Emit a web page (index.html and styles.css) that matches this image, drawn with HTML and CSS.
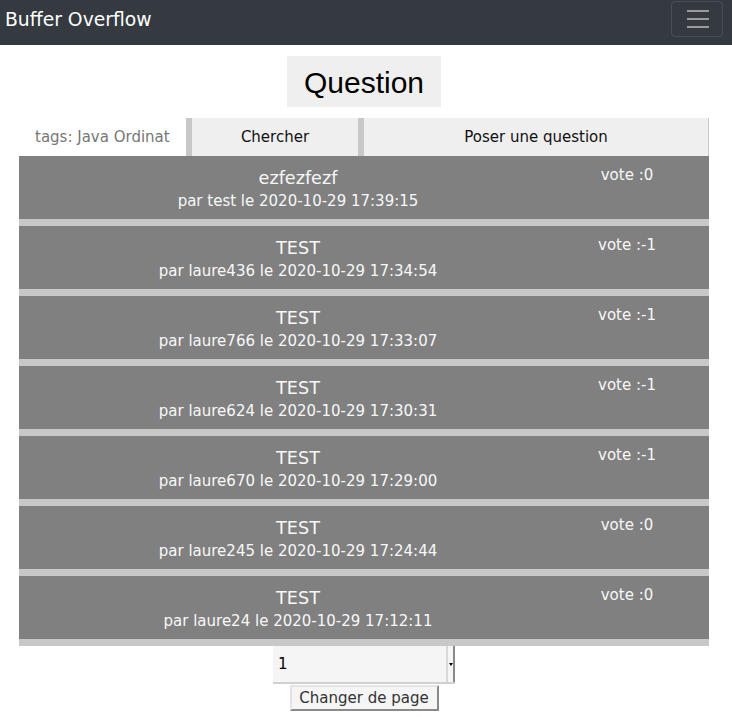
FILE: index.html
```html
<!DOCTYPE html>
<html lang="fr">
<head>
<meta charset="utf-8">
<title>Buffer Overflow</title>
<link rel="stylesheet" href="styles.css">
</head>
<body>
<nav class="navbar">
  <span class="brand">Buffer Overflow</span>
  <button class="toggler" type="button" aria-label="menu">
    <svg width="30" height="30" viewBox="0 0 30 30"><path d="M4 7h22M4 15h22M4 23h22" stroke="rgba(255,255,255,0.5)" stroke-width="2" stroke-linecap="butt" fill="none"/></svg>
  </button>
</nav>
<main class="main">
  <div class="heading-wrap"><h1 class="heading">Question</h1></div>
  <div class="tabs">
    <input class="tag-input" type="text" placeholder="tags: Java Ordinateur">
    <button class="tab-btn tab-search" type="button">Chercher</button>
    <button class="tab-btn tab-ask" type="button">Poser une question</button>
  </div>
  <ul class="questions">
    <li class="q"><div class="q-main"><div class="q-title">ezfezfezf</div><div class="q-meta">par test le 2020-10-29 17:39:15</div></div><div class="q-vote">vote :0</div></li>
    <li class="q"><div class="q-main"><div class="q-title">TEST</div><div class="q-meta">par laure436 le 2020-10-29 17:34:54</div></div><div class="q-vote">vote :-1</div></li>
    <li class="q"><div class="q-main"><div class="q-title">TEST</div><div class="q-meta">par laure766 le 2020-10-29 17:33:07</div></div><div class="q-vote">vote :-1</div></li>
    <li class="q"><div class="q-main"><div class="q-title">TEST</div><div class="q-meta">par laure624 le 2020-10-29 17:30:31</div></div><div class="q-vote">vote :-1</div></li>
    <li class="q"><div class="q-main"><div class="q-title">TEST</div><div class="q-meta">par laure670 le 2020-10-29 17:29:00</div></div><div class="q-vote">vote :-1</div></li>
    <li class="q"><div class="q-main"><div class="q-title">TEST</div><div class="q-meta">par laure245 le 2020-10-29 17:24:44</div></div><div class="q-vote">vote :0</div></li>
    <li class="q"><div class="q-main"><div class="q-title">TEST</div><div class="q-meta">par laure24 le 2020-10-29 17:12:11</div></div><div class="q-vote">vote :0</div></li>
  </ul>
  <div class="pager">
    <div class="select-wrap">
      <select class="page-select"><option>1</option><option>2</option></select>
      <span class="select-arrow"></span>
    </div>
    <button class="page-btn" type="button">Changer de page</button>
  </div>
</main>
</body>
</html>
```
FILE: styles.css
```css
html, body {
  margin: 0;
  padding: 0;
  background: #ffffff;
}
body {
  font-family: "DejaVu Sans", sans-serif;
  font-size: 15px;
  color: #212529;
}
.navbar {
  height: 45px;
  box-sizing: border-box;
  background: #343a40;
  display: flex;
  justify-content: space-between;
  align-items: flex-start;
  padding: 1px 9px 0 5px;
}
.brand {
  color: #ffffff;
  font-size: 18.75px;
  line-height: 37px;
}
.toggler {
  width: 52px;
  height: 36px;
  box-sizing: border-box;
  background: transparent;
  border: 1px solid rgba(255, 255, 255, 0.1);
  border-radius: 4px;
  padding: 0;
  display: flex;
  align-items: center;
  justify-content: center;
}
.toggler svg {
  display: block;
  margin-left: 2px;
}
.main {
  margin: 0 23px 0 19px;
}
.heading-wrap {
  display: flex;
  justify-content: center;
  padding-top: 11px;
}
.heading {
  margin: 0;
  font-family: "Liberation Sans", Arial, sans-serif;
  font-weight: normal;
  font-size: 30px;
  line-height: 36px;
  padding: 9px 17px 6px;
  background: #efefef;
  color: #000000;
}
.tabs {
  display: flex;
  height: 38px;
  margin-top: 11px;
}
.tag-input {
  width: 167px;
  box-sizing: border-box;
  border: none;
  outline: none;
  padding: 0 16px 0 16px;
  margin: 0;
  background: #ffffff;
  font-family: "DejaVu Sans", sans-serif;
  font-size: 15px;
  color: #333;
}
.tag-input::placeholder {
  color: #777777;
  opacity: 1;
}
.tab-btn {
  box-sizing: border-box;
  margin: 0;
  border: none;
  border-left: 6px solid #c8c8c8;
  background: #efefef;
  font-family: "DejaVu Sans", sans-serif;
  font-size: 15px;
  color: #111111;
  padding: 0;
  line-height: 38px;
}
.tab-search {
  width: 172px;
}
.tab-ask {
  width: 351px;
  border-right: 1px solid #c8c8c8;
}
.questions {
  list-style: none;
  margin: 0;
  padding: 0;
}
.q {
  display: grid;
  grid-template-columns: 558px 1fr;
  align-items: start;
  height: 70px;
  box-sizing: border-box;
  background: #808080;
  border-bottom: 7px solid #c8c8c8;
  color: #f8f8f8;
}
.q-main {
  text-align: center;
  padding-top: 11px;
}
.q-title {
  font-size: 17.6px;
  line-height: 23px;
}
.q-meta {
  font-size: 15px;
  line-height: 21px;
  margin-top: 1px;
}
.q-vote {
  text-align: center;
  padding-top: 9px;
  padding-right: 32px;
  font-size: 15px;
  line-height: 21px;
}
.pager {
  display: flex;
  flex-direction: column;
  align-items: center;
}
.select-wrap {
  display: flex;
  width: 182px;
  height: 38px;
  box-sizing: border-box;
  border-bottom: 2px solid #d0d0d0;
  background: #f5f5f5;
}
.page-select {
  appearance: none;
  -webkit-appearance: none;
  flex: 1;
  border: none;
  outline: none;
  background: #f5f5f5;
  font-family: "DejaVu Sans", sans-serif;
  font-size: 15px;
  color: #000000;
  padding: 0 0 0 5px;
  margin: 0;
}
.select-arrow {
  width: 9px;
  box-sizing: border-box;
  border-left: 2px solid #d8d8d8;
  border-right: 2px solid #8a8a8a;
  background: #f5f5f5;
  display: flex;
  align-items: center;
  justify-content: center;
}
.select-arrow::before {
  content: "";
  width: 0;
  height: 0;
  border-left: 2px solid transparent;
  border-right: 2px solid transparent;
  border-top: 3px solid #000000;
}
.page-btn {
  margin-top: 1px;
  width: 149px;
  height: 26px;
  box-sizing: border-box;
  background: #f5f5f5;
  border: 2px solid;
  border-color: #e4e4e4 #8a8a8a #8a8a8a #e4e4e4;
  font-family: "DejaVu Sans", sans-serif;
  font-size: 15px;
  color: #333333;
  padding: 0;
}
```
